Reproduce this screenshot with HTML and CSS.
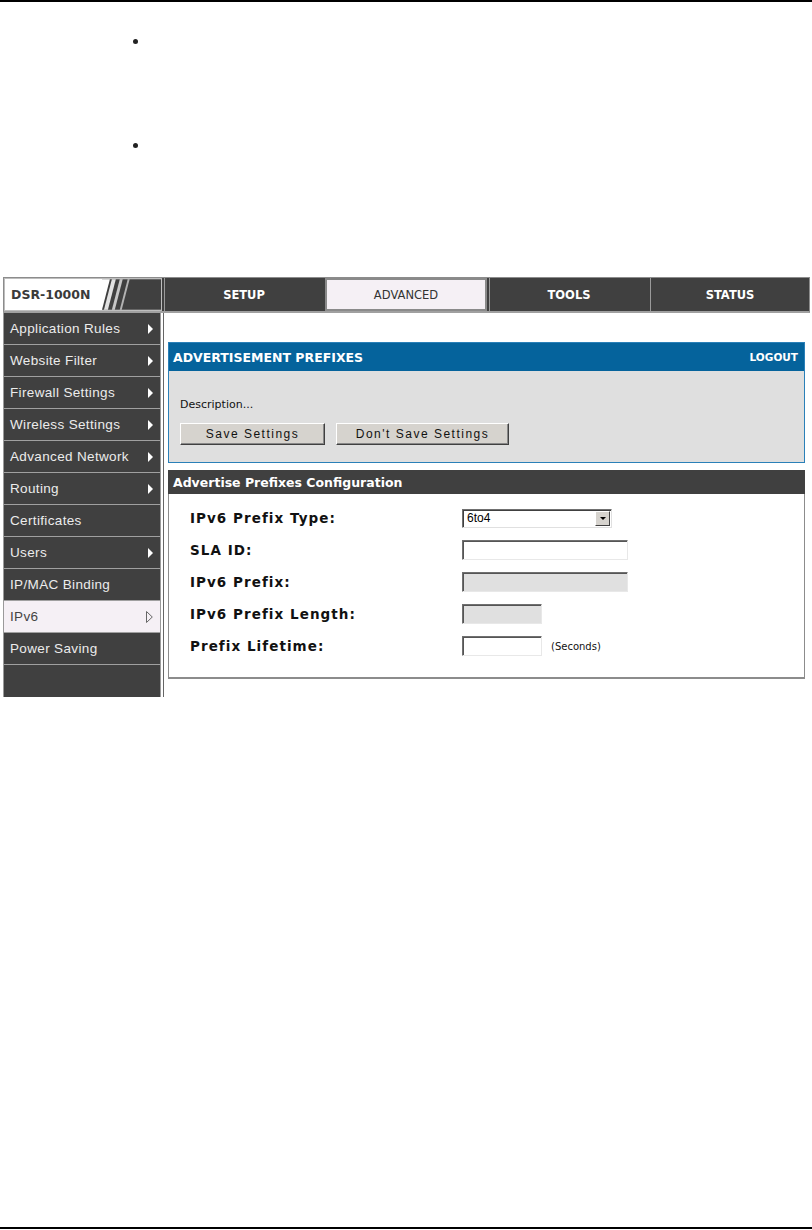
FILE: index.html
```html
<!DOCTYPE html>
<html>
<head>
<meta charset="utf-8">
<link rel="stylesheet" href="styles.css">
</head>
<body>
<div class="page">
  <div class="rule-top"></div>
  <ul class="bullets">
    <li></li>
    <li></li>
  </ul>

  <div class="shot">
    <div class="topbar">
      <div class="logo">
        <span class="logo-text">DSR-1000N</span>
        <svg class="logo-slashes" width="60" height="31" viewBox="0 0 60 31">
          <rect x="0" y="0" width="60" height="31" fill="#404040"/>
          <polygon points="0,0 8,0 0,31" fill="#ffffff"/>
          <polygon points="10,0 14,0 6,31 2,31" fill="#ffffff" opacity="0.85"/>
          <polygon points="18,0 21,0 13,31 10,31" fill="#ffffff" opacity="0.7"/>
          <polygon points="26,0 28,0 20,31 18,31" fill="#ffffff" opacity="0.6"/>
        </svg>
      </div>
      <div class="tab">SETUP</div>
      <div class="tab tab-active">ADVANCED</div>
      <div class="tab">TOOLS</div>
      <div class="tab">STATUS</div>
    </div>

    <div class="main">
      <nav class="sidebar">
        <div class="nav-item">Application Rules<span class="arrow"></span></div>
        <div class="nav-item">Website Filter<span class="arrow"></span></div>
        <div class="nav-item">Firewall Settings<span class="arrow"></span></div>
        <div class="nav-item">Wireless Settings<span class="arrow"></span></div>
        <div class="nav-item">Advanced Network<span class="arrow"></span></div>
        <div class="nav-item">Routing<span class="arrow"></span></div>
        <div class="nav-item">Certificates</div>
        <div class="nav-item">Users<span class="arrow"></span></div>
        <div class="nav-item">IP/MAC Binding</div>
        <div class="nav-item nav-active">IPv6
          <svg class="arrow-outline" width="7" height="12" viewBox="0 0 7 12">
            <polygon points="0.5,0.5 6.3,6 0.5,11.5" fill="none" stroke="#666666" stroke-width="1"/>
          </svg>
        </div>
        <div class="nav-item">Power Saving</div>
        <div class="nav-filler"></div>
      </nav>

      <section class="content">
        <div class="panel">
          <div class="panel-head">
            <span>ADVERTISEMENT PREFIXES</span>
            <span class="logout">LOGOUT</span>
          </div>
          <div class="panel-body">
            <div class="desc">Description...</div>
            <div class="buttons">
              <button class="btn btn-save">Save Settings</button>
              <button class="btn btn-cancel">Don't Save Settings</button>
            </div>
          </div>
        </div>

        <div class="config">
          <div class="config-head">Advertise Prefixes Configuration</div>
          <div class="config-body">
            <div class="row">
              <label class="lbl">IPv6 Prefix Type:</label>
              <div class="select">
                <span class="select-val">6to4</span>
                <span class="select-btn"><span class="caret"></span></span>
              </div>
            </div>
            <div class="row">
              <label class="lbl">SLA ID:</label>
              <div class="field field-wide"></div>
            </div>
            <div class="row">
              <label class="lbl">IPv6 Prefix:</label>
              <div class="field field-wide field-disabled"></div>
            </div>
            <div class="row">
              <label class="lbl">IPv6 Prefix Length:</label>
              <div class="field field-short field-disabled"></div>
            </div>
            <div class="row">
              <label class="lbl">Prefix Lifetime:</label>
              <div class="field field-short"></div>
              <span class="unit">(Seconds)</span>
            </div>
          </div>
        </div>
      </section>
    </div>
  </div>

  <div class="rule-bottom"></div>
</div>
</body>
</html>
```

FILE: styles.css
```css
html, body {
  margin: 0;
  padding: 0;
  background: #ffffff;
}

.page {
  height: 1230px;
  display: flex;
  flex-direction: column;
  font-family: "Liberation Sans", Arial, sans-serif;
}

.rule-top {
  height: 2px;
  background: #000000;
  flex: none;
}

.rule-bottom {
  margin-top: auto;
  margin-bottom: 1px;
  height: 2px;
  background: #000000;
  flex: none;
}

.bullets {
  list-style: none;
  margin: 37px 0 0 0;
  padding: 0 0 0 133px;
}

.bullets li {
  height: 104px;
}

.bullets li::before {
  content: "";
  display: block;
  width: 5px;
  height: 5px;
  border-radius: 50%;
  background: #222222;
}

.shot {
  margin: 30px 0 0 3px;
  width: 807px;
}

/* top bar */
.topbar {
  display: flex;
  height: 33px;
  background: #404040;
  border: 1px solid #8c8c8c;
  border-bottom: 2px solid #a0a0a0;
}

.logo {
  width: 158px;
  display: flex;
  align-items: center;
  background: #ffffff;
  border: 1px solid #bdbdbd;
  box-sizing: border-box;
  height: 33px;
  flex: none;
}

.logo-text {
  font-family: "DejaVu Sans", Verdana, sans-serif;
  font-weight: bold;
  font-size: 12.5px;
  color: #3a3a3a;
  padding-left: 6px;
  width: 92px;
}

.logo-slashes {
  display: block;
  margin-left: auto;
}

.tab {
  flex: 1;
  display: flex;
  align-items: center;
  justify-content: center;
  color: #ffffff;
  font-family: "DejaVu Sans", Verdana, sans-serif;
  font-weight: bold;
  font-size: 11.5px;
  border-left: 1px solid #9a9a9a;
  margin-left: 2px;
}

.tab-active {
  background: #f5f0f5;
  color: #333333;
  font-weight: normal;
  border: 2px solid #8a8a8a;
  margin: 0 0 0 2px;
}

/* main */
.main {
  display: flex;
  align-items: flex-start;
}

.sidebar {
  width: 158px;
  flex: none;
  background: #404040;
  border-right: 1px solid #9a9a9a;
  border-left: 1px solid #9a9a9a;
  box-sizing: border-box;
  box-shadow: 2px 0 0 #ffffff, 3px 0 0 #666666;
}

.nav-item {
  position: relative;
  height: 31px;
  border-bottom: 1px solid #a0a0a0;
  display: flex;
  align-items: center;
  padding-left: 6px;
  font-size: 13.5px;
  letter-spacing: 0.35px;
  color: #ececec;
}

.nav-active {
  background: #f5f0f5;
  color: #444444;
}

.arrow {
  position: absolute;
  right: 7px;
  top: 11px;
  width: 0;
  height: 0;
  border-top: 5px solid transparent;
  border-bottom: 5px solid transparent;
  border-left: 5px solid #ffffff;
}

.arrow-outline {
  position: absolute;
  right: 7px;
  top: 10px;
  display: block;
}

.nav-filler {
  height: 32px;
}

.content {
  flex: 1;
  padding: 29px 5px 0 7px;
}

/* advertisement panel */
.panel {
  border: 1px solid #2a80b8;
}

.panel-head {
  height: 28px;
  background: #05639c;
  display: flex;
  align-items: center;
  justify-content: space-between;
  padding: 0 6px 0 4px;
  color: #ffffff;
  font-family: "DejaVu Sans", Verdana, sans-serif;
  font-weight: bold;
  font-size: 12.5px;
}

.logout {
  font-size: 10.5px;
}

.panel-body {
  background: #dfdfdf;
  height: 91px;
  padding: 0 11px;
  box-sizing: border-box;
}

.desc {
  padding-top: 27px;
  color: #111111;
  font-family: "DejaVu Sans", Tahoma, sans-serif;
  font-size: 11px;
}

.buttons {
  display: flex;
  gap: 11px;
  margin-top: 12px;
}

.btn {
  height: 22px;
  background: #d6d3ce;
  border: 1px solid;
  border-color: #ffffff #404040 #404040 #ffffff;
  box-shadow: inset -1px -1px 0 #888888;
  font-family: "Liberation Sans", Arial, sans-serif;
  font-size: 12px;
  letter-spacing: 1.5px;
  color: #111111;
  padding: 0;
}

.btn-save {
  width: 145px;
}

.btn-cancel {
  width: 173px;
}

/* config section */
.config {
  margin-top: 7px;
}

.config-head {
  height: 24px;
  background: #404040;
  color: #ffffff;
  font-family: "DejaVu Sans", Verdana, sans-serif;
  font-weight: bold;
  font-size: 12.5px;
  display: flex;
  align-items: center;
  padding-left: 5px;
}

.config-body {
  border: 1px solid #8c8c8c;
  border-top: none;
  border-bottom: 2px solid #8c8c8c;
  padding: 8px 0 15px 21px;
}

.row {
  height: 32px;
  display: flex;
  align-items: center;
}

.lbl {
  width: 272px;
  flex: none;
  font-family: "DejaVu Sans", Verdana, sans-serif;
  font-weight: bold;
  font-size: 13.5px;
  letter-spacing: 1.05px;
  color: #111111;
}

.select {
  width: 150px;
  height: 19px;
  box-sizing: border-box;
  border: 1px solid;
  border-color: #707070 #e0e0e0 #e0e0e0 #707070;
  box-shadow: inset 1px 1px 0 #404040;
  background: #ffffff;
  display: flex;
  align-items: center;
}

.select-val {
  flex: 1;
  padding-left: 4px;
  font-size: 12px;
  font-family: "Liberation Sans", Arial, sans-serif;
  color: #000000;
}

.select-btn {
  width: 15px;
  height: 15px;
  margin-right: 1px;
  background: #d6d3ce;
  border: 1px solid;
  border-color: #ffffff #404040 #404040 #ffffff;
  box-sizing: border-box;
  display: flex;
  align-items: center;
  justify-content: center;
}

.caret {
  width: 0;
  height: 0;
  border-left: 3px solid transparent;
  border-right: 3px solid transparent;
  border-top: 3px solid #000000;
}

.field {
  height: 20px;
  box-sizing: border-box;
  border: 1px solid;
  border-color: #707070 #e8e8e8 #e8e8e8 #707070;
  box-shadow: inset 1px 1px 0 #555555;
  background: #ffffff;
}

.field-wide {
  width: 166px;
}

.field-short {
  width: 80px;
}

.field-disabled {
  background: #e0e0e0;
}

.unit {
  margin-left: 9px;
  font-family: "DejaVu Sans", Tahoma, sans-serif;
  font-size: 10px;
  color: #111111;
}
```
